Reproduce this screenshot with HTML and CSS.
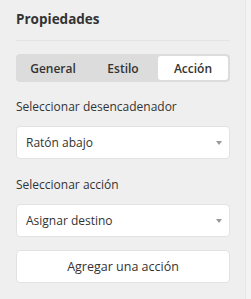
FILE: index.html
```html
<!DOCTYPE html>
<html lang="es">
  <head>
    <meta charset="UTF-8" />
    <title>Propiedades</title>
    <link rel="stylesheet" href="styles.css">
  </head>
  <body>
    <div class="panel">
      <h2 class="panel-title">Propiedades</h2>
      <div class="tabs">
        <span class="tab">General</span>
        <span class="tab">Estilo</span>
        <span class="tab active">Acción</span>
      </div>
      <div class="field">
        <div class="field-label">Seleccionar desencadenador</div>
        <div class="select">
          <span>Ratón abajo</span>
          <span class="caret"></span>
        </div>
      </div>
      <div class="field">
        <div class="field-label">Seleccionar acción</div>
        <div class="select">
          <span>Asignar destino</span>
          <span class="caret"></span>
        </div>
      </div>
      <button class="add-btn">Agregar una acción</button>
    </div>
  </body>
</html>
```
FILE: styles.css
```css
body {
  margin: 0;
  font-family: "Open Sans", "Noto Sans", sans-serif;
  color: #333;
  background-color: #f3f3f3;
}
.panel {
  width: 246px;
  height: 299px;
  box-sizing: border-box;
  padding: 0 15px 0 16px;
  background-color: #efefef;
  border-right: 1px solid #e6e6e6;
}
.panel-title {
  margin: 0;
  padding: 8px 0 10px;
  font-size: 13.5px;
  font-weight: 700;
  line-height: 22px;
  color: #333;
  border-bottom: 1px solid #e4e4e4;
}
.tabs {
  display: grid;
  grid-template-columns: repeat(3, 1fr);
  margin-top: 13px;
  padding: 2px;
  height: 24px;
  background-color: #dcdcdc;
  border-radius: 4px;
}
.tab {
  display: flex;
  align-items: center;
  justify-content: center;
  font-size: 12px;
  font-weight: 600;
  color: #333;
  border-radius: 3px;
}
.tab.active {
  background-color: #fff;
}
.field {
  margin-top: 16px;
}
.field + .field {
  margin-top: 17px;
}
.field-label {
  font-size: 12px;
  line-height: 17px;
  color: #333;
}
.select {
  display: flex;
  align-items: center;
  justify-content: space-between;
  margin-top: 11px;
  height: 31px;
  padding: 0 7px 0 9px;
  background-color: #fff;
  border: 1px solid #e2e2e2;
  border-radius: 4px;
  font-size: 12px;
}
.caret {
  width: 0;
  height: 0;
  border-left: 3.5px solid transparent;
  border-right: 3.5px solid transparent;
  border-top: 4px solid #999;
}
.add-btn {
  display: block;
  width: 100%;
  height: 33px;
  margin-top: 13px;
  background-color: #fff;
  border: 1px solid #e2e2e2;
  border-radius: 4px;
  font-family: inherit;
  font-size: 12.5px;
  color: #333;
}
```
